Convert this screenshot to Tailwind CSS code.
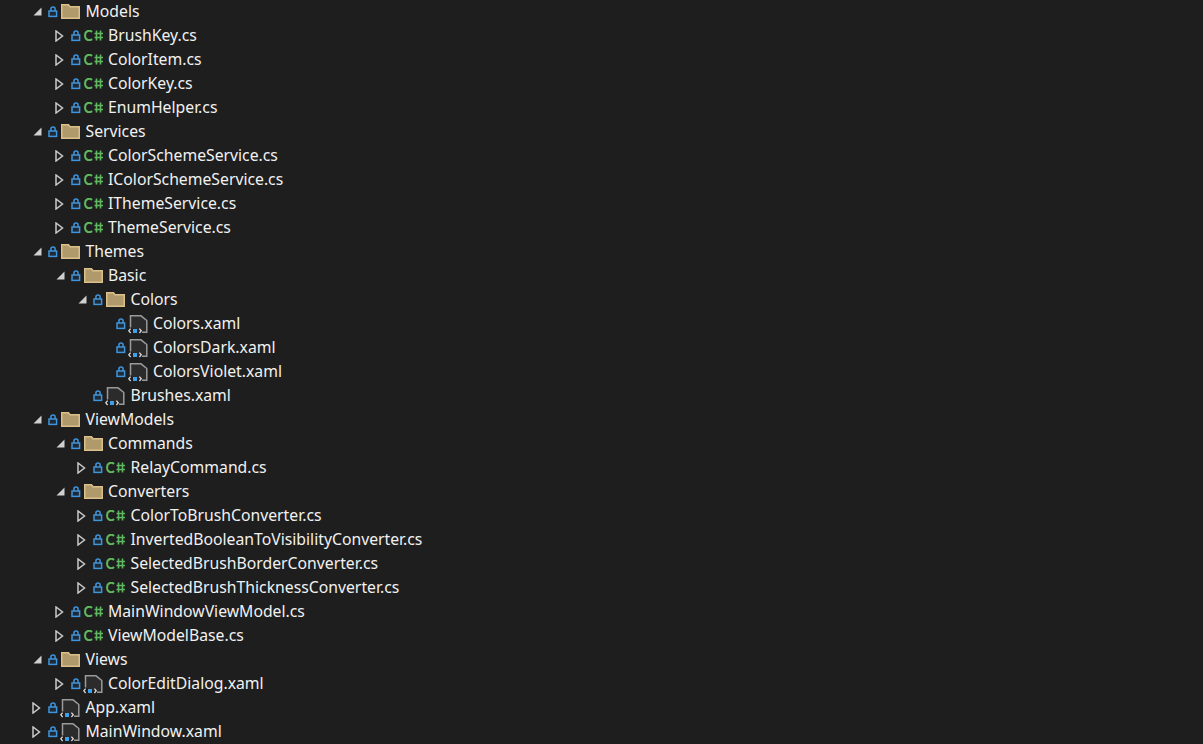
<!DOCTYPE html>
<html>
<head>
<title>Solution Explorer</title>
<script src="https://cdn.jsdelivr.net/npm/@tailwindcss/browser@4"></script>
</head>
<body class="bg-[#1e1e1e]">
<div id="tree" class="h-[744px] w-[1203px] overflow-hidden font-['Noto_Sans',sans-serif] text-[15.75px] text-[#f1f1f1]"></div>
<script>
const rows = [
  [0,"open","folder","Models"],
  [1,"closed","cs","BrushKey.cs"],
  [1,"closed","cs","ColorItem.cs"],
  [1,"closed","cs","ColorKey.cs"],
  [1,"closed","cs","EnumHelper.cs"],
  [0,"open","folder","Services"],
  [1,"closed","cs","ColorSchemeService.cs"],
  [1,"closed","cs","IColorSchemeService.cs"],
  [1,"closed","cs","IThemeService.cs"],
  [1,"closed","cs","ThemeService.cs"],
  [0,"open","folder","Themes"],
  [1,"open","folder","Basic"],
  [2,"open","folder","Colors"],
  [3,"","xaml","Colors.xaml"],
  [3,"","xaml","ColorsDark.xaml"],
  [3,"","xaml","ColorsViolet.xaml"],
  [2,"","xaml","Brushes.xaml"],
  [0,"open","folder","ViewModels"],
  [1,"open","folder","Commands"],
  [2,"closed","cs","RelayCommand.cs"],
  [1,"open","folder","Converters"],
  [2,"closed","cs","ColorToBrushConverter.cs"],
  [2,"closed","cs","InvertedBooleanToVisibilityConverter.cs"],
  [2,"closed","cs","SelectedBrushBorderConverter.cs"],
  [2,"closed","cs","SelectedBrushThicknessConverter.cs"],
  [1,"closed","cs","MainWindowViewModel.cs"],
  [1,"closed","cs","ViewModelBase.cs"],
  [0,"open","folder","Views"],
  [1,"closed","xaml","ColorEditDialog.xaml"],
  [0,"closed","xaml","App.xaml"],
  [0,"closed","xaml","MainWindow.xaml"],
];

const arrow = {
  open: '<svg class="ml-px -mt-px" width="9" height="9" viewBox="0 0 9 9"><path d="M8.5 .5V8.5H.5Z" fill="#cfcfcf"/></svg>',
  closed: '<svg class="-mt-px" width="9" height="12" viewBox="0 0 9 12"><path d="M1 1V11L7.5 6Z" fill="none" stroke="#c8c8c8" stroke-width="1.5"/></svg>',
  "": ""
};
const lock = '<svg width="10" height="12" viewBox="0 0 10 12"><path d="M2.9 5V3.2a2.1 2.1 0 0 1 4.2 0V5" fill="none" stroke="#3f95dc" stroke-width="1.5"/><rect x="1" y="5" width="7.6" height="5.4" fill="#1e2a36" stroke="#3f95dc" stroke-width="1.5"/></svg>';
const icons = {
  folder: '<svg class="-mt-px" width="19" height="15" viewBox="0 0 19 15"><path d="M.75 14.2V.8H7.5L9 2.8H18.25V14.2Z" fill="#b09a6c" stroke="#dcc08a" stroke-width="1.5"/></svg>',
  cs: '<svg class="-mt-px" width="20" height="11" viewBox="0 0 20 11"><path d="M8 2A4 4 0 0 0 1.2 5.5A4 4 0 0 0 8 9" fill="none" stroke="#5fb760" stroke-width="2"/><path d="M12.5 .5V10.5M16.5 .5V10.5M10.5 3.5H19M10.5 7.5H19" stroke="#5fb760" stroke-width="1.6" fill="none"/></svg>',
  xaml: '<svg class="-ml-px mt-px" width="20" height="20" viewBox="0 0 20 20"><path d="M2.5 12.5V.8H13L18.8 5.5V17.2H14" fill="#2b2b2b" stroke="#9a9a9a" stroke-width="1.5"/><path d="M2.6 13.6L.8 15.8L2.6 18M11.4 13.6L13.2 15.8L11.4 18" fill="none" stroke="#dcdcdc" stroke-width="1.3"/><rect x="5" y="14" width="4" height="4" fill="#3f9fe8"/></svg>'
};

const tree = document.getElementById("tree");
for (const [depth, state, kind, name] of rows) {
  const row = document.createElement("div");
  row.className = "flex h-[24px] items-center whitespace-nowrap";
  row.style.paddingLeft = (32 + depth * 22.5) + "px";
  row.innerHTML =
    '<span class="flex w-[16px] items-center">' + arrow[state] + '</span>' +
    '<span class="flex w-[13px] items-center">' + lock + '</span>' +
    '<span class="flex w-[24.5px] items-center">' + icons[kind] + '</span>' +
    '<span>' + name + '</span>';
  tree.appendChild(row);
}
</script>
</body>
</html>
